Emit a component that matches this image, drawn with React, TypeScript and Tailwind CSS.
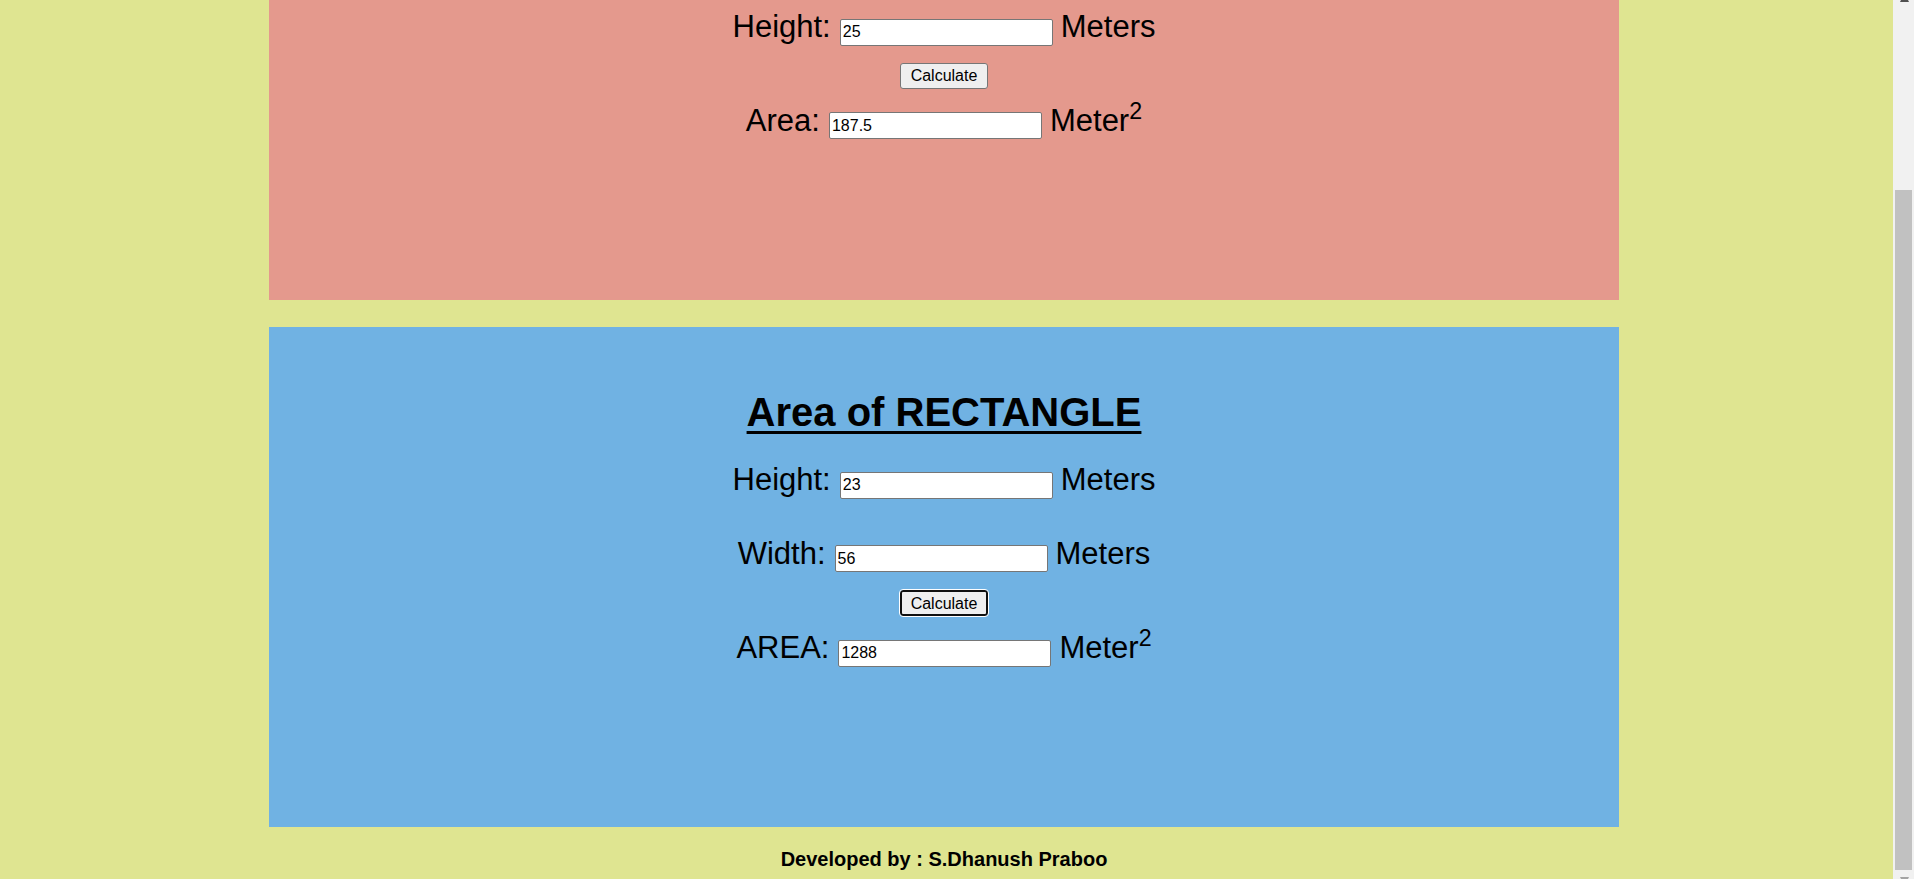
import React from "react";

type Row = { label: string; value: string; unit: string; sup?: boolean };

function InputRow({ row, className }: { row: Row; className: string }) {
  return (
    <div className={`flex items-baseline ${className}`}>
      <span className="text-[31px] leading-[35px]">{row.label}</span>
      <input
        type="text"
        readOnly
        value={row.value}
        className="ml-[9px] mr-[8px] w-[213px] h-[27px] border border-[#767676] bg-white px-[2px] text-[16px] text-black rounded-[2px] outline-none"
      />
      <span className="text-[31px] leading-[35px]">
        {row.unit}
        {row.sup && <sup>2</sup>}
      </span>
    </div>
  );
}

function CalcButton({ focused }: { focused?: boolean }) {
  return (
    <button
      className={`w-[88px] h-[26px] bg-[#efefef] text-[16px] text-black rounded-[3px] ${
        focused ? "border-2 border-[#101010] outline-1 outline-white" : "border border-[#767676]"
      }`}
    >
      Calculate
    </button>
  );
}

export default function App() {
  return (
    <div className="h-[879px] overflow-hidden flex bg-[#dfe591] text-black font-['Liberation_Sans',Arial,sans-serif]">
      <div className="flex-1 min-w-0 overflow-hidden flex flex-col">
        {/* triangle card, top part scrolled out of view */}
        <section className="ml-[269px] w-[1350px] h-[300px] flex flex-col items-center pt-[9px] bg-[#e4998d]">
          <InputRow row={{ label: "Height:", value: "25", unit: "Meters" }} className="" />
          <div className="mt-[17px]">
            <CalcButton />
          </div>
          <InputRow row={{ label: "Area:", value: "187.5", unit: "Meter", sup: true }} className="mt-[14px]" />
        </section>

        {/* rectangle card */}
        <section className="mt-[27px] ml-[269px] w-[1350px] h-[500px] flex flex-col items-center pt-[62px] bg-[#70b2e3]">
          <h2 className="text-[40px] leading-[46px] font-bold underline decoration-[3px] underline-offset-[5px]">
            Area of RECTANGLE
          </h2>
          <InputRow row={{ label: "Height:", value: "23", unit: "Meters" }} className="mt-[27px]" />
          <InputRow row={{ label: "Width:", value: "56", unit: "Meters" }} className="mt-[37px]" />
          <div className="mt-[18px]">
            <CalcButton focused />
          </div>
          <InputRow row={{ label: "AREA:", value: "1288", unit: "Meter", sup: true }} className="mt-[14px]" />
        </section>

        <footer className="ml-[269px] w-[1350px] mt-[21px] text-center text-[20px] leading-[23px] font-bold">
          Developed by : S.Dhanush Praboo
        </footer>
      </div>

      {/* scrollbar */}
      <div className="w-[21px] bg-[#f1f1f1] flex flex-col items-center">
        <svg width="9" height="2" viewBox="0 0 9 2" className="ml-[1px]">
          <path d="M1 0 H8 L9 2 H0 Z" fill="#505050" />
        </svg>
        <div className="mt-[188px] h-[680px] w-[17px] bg-[#c1c1c1]" />
        <svg width="9" height="2" viewBox="0 0 9 2" className="mt-auto ml-[1px]">
          <path d="M0 0 H9 L8 2 H1 Z" fill="#a3a3a3" />
        </svg>
      </div>
    </div>
  );
}
